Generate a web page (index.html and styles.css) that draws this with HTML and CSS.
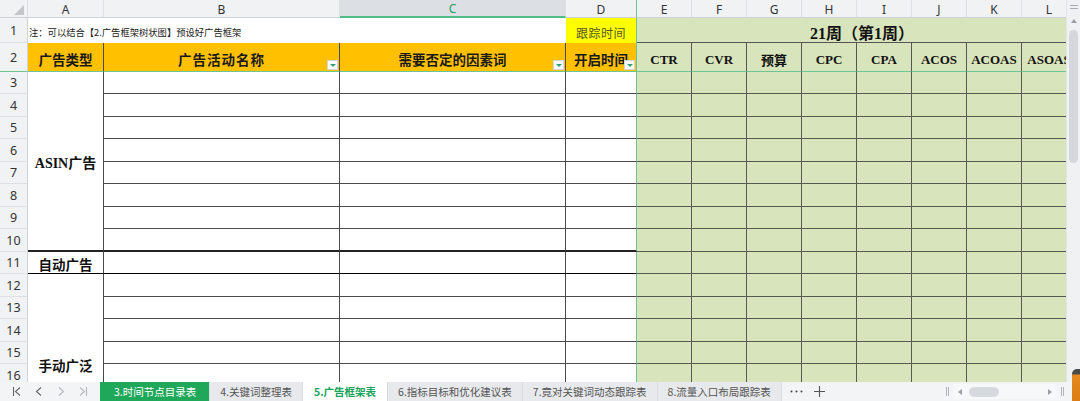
FILE: index.html
```html
<!DOCTYPE html>
<html lang="zh-CN">
<head>
    <meta charset="UTF-8">
    <meta name="viewport" content="width=device-width, initial-scale=1.0">
    <title>5.广告框架表</title>
    <link rel="stylesheet" href="styles.css">
</head>
<body>
    <div class="app">
        <div class="workspace">
            <div class="sheet-wrap">
                <div class="sheet" id="sheet">
                    <!-- column headers -->
                    <div class="ch corner">
                        <svg width="10" height="10" viewBox="0 0 10 10"><polygon points="10,0 10,10 0,10" fill="#c3c6cb"/></svg>
                    </div>
                    <div class="ch">A</div>
                    <div class="ch">B</div>
                    <div class="ch sel">C</div>
                    <div class="ch freeze-r">D</div>
                    <div class="ch">E</div>
                    <div class="ch">F</div>
                    <div class="ch">G</div>
                    <div class="ch">H</div>
                    <div class="ch">I</div>
                    <div class="ch">J</div>
                    <div class="ch">K</div>
                    <div class="ch">L</div>

                    <!-- row 1 -->
                    <div class="rh">1</div>
                    <div class="note">注：可以结合【2.广告框架树状图】预设好广告框架</div>
                    <div class="track">跟踪时间</div>
                    <div class="week">21周（第1周）</div>

                    <!-- row 2 -->
                    <div class="rh freeze-b">2</div>
                    <div class="hd">广告类型</div>
                    <div class="hd spaced">广告活动名称<span class="filter"></span></div>
                    <div class="hd">需要否定的因素词<span class="filter"></span></div>
                    <div class="hd freeze-r">开启时间<span class="filter"></span></div>
                    <div class="mh">CTR</div>
                    <div class="mh">CVR</div>
                    <div class="mh">预算</div>
                    <div class="mh">CPC</div>
                    <div class="mh">CPA</div>
                    <div class="mh">ACOS</div>
                    <div class="mh">ACOAS</div>
                    <div class="mh">ASOAS</div>
                </div>
            </div>
            <div class="vscroll">
                <div class="grip-h"></div>
                <div class="up">
                    <svg width="6" height="4" viewBox="0 0 6 4"><polygon points="3,0 6,4 0,4" fill="#9a9ea5"/></svg>
                </div>
                <div class="vthumb"></div>
            </div>
        </div>

        <div class="tabbar">
            <div class="nav">
                <svg width="10" height="11" viewBox="0 0 10 11"><path d="M1.5 1v9M8 1.5L3.5 5.5 8 9.5" stroke="#666" stroke-width="1.1" fill="none"/></svg>
                <svg width="10" height="11" viewBox="0 0 10 11"><path d="M7 1.5L2.5 5.5 7 9.5" stroke="#666" stroke-width="1.1" fill="none"/></svg>
                <svg width="10" height="11" viewBox="0 0 10 11"><path d="M3 1.5L7.5 5.5 3 9.5" stroke="#b4b7bc" stroke-width="1.1" fill="none"/></svg>
                <svg width="10" height="11" viewBox="0 0 10 11"><path d="M2 1.5L6.5 5.5 2 9.5M8.5 1v9" stroke="#b4b7bc" stroke-width="1.1" fill="none"/></svg>
            </div>
            <div class="tab green">3.时间节点目录表</div>
            <div class="tab">4.关键词整理表</div>
            <div class="tab active">5.广告框架表</div>
            <div class="tab">6.指标目标和优化建议表</div>
            <div class="tab">7.竟对关键词动态跟踪表</div>
            <div class="tab">8.流量入口布局跟踪表</div>
            <div class="more">
                <svg width="13" height="3" viewBox="0 0 13 3"><circle cx="1.5" cy="1.5" r="1" fill="#444"/><circle cx="6.5" cy="1.5" r="1" fill="#444"/><circle cx="11.5" cy="1.5" r="1" fill="#444"/></svg>
            </div>
            <div class="add">
                <svg width="11" height="11" viewBox="0 0 11 11"><path d="M5.5 0v11M0 5.5h11" stroke="#555" stroke-width="1.1"/></svg>
            </div>
            <div class="spacer"></div>
            <div class="hscroll">
                <span class="grip"></span>
                <div class="htrack">
                    <svg width="4" height="6" viewBox="0 0 4 6"><polygon points="0,3 4,0 4,6" fill="#9a9ea5"/></svg>
                    <span class="hthumb"></span>
                    <svg class="right" width="4" height="6" viewBox="0 0 4 6"><polygon points="4,3 0,0 0,6" fill="#9a9ea5"/></svg>
                </div>
                <span class="grip"></span>
            </div>
        </div>
        <div class="float-btn"></div>
    </div>

    <script>
        document.addEventListener('DOMContentLoaded', function() {
            const sheet = document.getElementById('sheet');

            // merged cells in column A
            const groups = {
                3: '<div class="cell a asin">ASIN广告</div>',
                11: '<div class="cell a auto">自动广告</div>',
                12: '<div class="cell a manual">手动广泛</div>'
            };

            for (let r = 3; r <= 20; r++) {
                let edge = '';
                if (r === 10) edge = ' thick';
                if (r === 11) edge = ' dark';

                let html = `<div class="rh">${r}</div>`;
                if (groups[r]) html += groups[r];
                if (r === 20) html += '<div class="cell a"></div>';
                html += `<div class="cell w${edge}"></div>`;
                html += `<div class="cell w${edge}"></div>`;
                html += `<div class="cell w freeze-r${edge}"></div>`;
                html += '<div class="cell g"></div>'.repeat(8);
                sheet.insertAdjacentHTML('beforeend', html);
            }
        });
    </script>
</body>
</html>
```

FILE: styles.css
```css
* {
    box-sizing: border-box;
}

body {
    margin: 0;
    padding: 0;
    width: 1080px;
    height: 401px;
    overflow: hidden;
    background: #ffffff;
    font-family: "Noto Sans CJK SC", "Noto Sans", sans-serif;
    color: #333;
}

.app {
    position: relative;
    display: flex;
    flex-direction: column;
    width: 1080px;
    height: 401px;
}

.workspace {
    display: flex;
    height: 382px;
    overflow: hidden;
}

.sheet-wrap {
    width: 1066px;
    overflow: hidden;
}

.sheet {
    display: grid;
    grid-template-columns: 28px 76px 236px 226px 71px repeat(8, 55px);
    grid-template-rows: 18px 25px 29px repeat(9, 22px 23px);
    width: 1077px;
}

.sheet > div {
    position: relative;
    display: flex;
    align-items: center;
    justify-content: center;
    white-space: nowrap;
    overflow: hidden;
}

/* headers */
.ch {
    background: #f1f2f4;
    border-right: 1px solid #dcdfe3;
    border-bottom: 1px solid #cfd2d7;
    font-family: "Noto Sans", "Liberation Sans", sans-serif;
    font-size: 12px;
    color: #333;
    padding-top: 1px;
}

.ch.corner {
    justify-content: flex-end;
    align-items: flex-start;
    padding: 5px 3px 0 0;
}

.ch.sel {
    background: #dcdfe4;
    color: #22a263;
    border-bottom: 2px solid #52bd86;
}

.rh {
    background: #f1f2f4;
    border-right: 1px solid #cfd2d7;
    border-bottom: 1px solid #dcdfe3;
    font-family: "Noto Sans", "Liberation Sans", sans-serif;
    font-size: 12.5px;
    color: #333;
}

.freeze-r {
    border-right: 1px solid #6cc593 !important;
}

.freeze-b {
    border-bottom: 1px solid #6cc593 !important;
}

/* row 1 */
.sheet > .note {
    grid-column: span 3;
    justify-content: flex-start;
    padding: 3px 0 0 1px;
    font-size: 9.3px;
    color: #222;
}

.track {
    background: #ffff00;
    border-right: 1px solid #6cc593;
    font-size: 12px;
    letter-spacing: 0.5px;
    color: #57572a;
    padding-top: 3px;
}

.week {
    grid-column: span 8;
    background: #d8e4bc;
    border-bottom: 1px solid #555;
    font-family: "Liberation Serif", "Noto Sans CJK SC", serif;
    font-size: 16px;
    font-weight: bold;
    color: #111;
    padding: 4px 0 0 10px;
}

/* row 2 */
.hd {
    background: #ffc000;
    border-right: 1px solid #4a4a4a;
    border-bottom: 1px solid #6cc593;
    font-size: 13.5px;
    font-weight: bold;
    color: #1a1a1a;
    padding-top: 4px;
}

.hd.spaced {
    letter-spacing: 1px;
}

.mh {
    background: #d8e4bc;
    border-right: 1px solid #555;
    border-bottom: 1px solid #6cc593;
    font-family: "Liberation Serif", "Noto Sans CJK SC", serif;
    font-size: 13px;
    font-weight: bold;
    color: #111;
    padding-top: 5px;
}

.filter {
    position: absolute;
    right: 1px;
    bottom: 1px;
    width: 11px;
    height: 10px;
    background: #fbfbfb;
    border: 1px solid #d6d6d6;
}

.filter::after {
    content: "";
    position: absolute;
    left: 2px;
    top: 3px;
    border-left: 3px solid transparent;
    border-right: 3px solid transparent;
    border-top: 3px solid #2e9f78;
}

/* data cells */
.cell.w {
    background: #fff;
    border-right: 1px solid #4a4a4a;
    border-bottom: 1px solid #4a4a4a;
}

.cell.g {
    background: #d8e4bc;
    border-right: 1px solid #575a52;
    border-bottom: 1px solid #575a52;
}

.cell.thick {
    border-bottom: 2px solid #222;
}

.cell.dark {
    border-bottom: 1px solid #000;
}

.cell.a {
    background: #fff;
    border-right: 1px solid #4a4a4a;
    border-bottom: 1px solid #000;
    font-family: "Liberation Serif", "Noto Sans CJK SC", serif;
    font-size: 13.5px;
    font-weight: bold;
    color: #111;
    padding-top: 2px;
}

.cell.asin {
    grid-row: span 8;
    font-size: 14px;
    border-bottom: 2px solid #222;
}

.cell.manual {
    grid-row: span 8;
}

/* vertical scrollbar */
.vscroll {
    width: 14px;
    background: #f0f1f3;
    border-left: 1px solid #e3e5e8;
    display: flex;
    flex-direction: column;
    align-items: center;
}

.grip-h {
    width: 8px;
    height: 4px;
    margin-top: 5px;
    border-top: 1px solid #a9adb3;
    border-bottom: 1px solid #a9adb3;
}

.up {
    margin-top: 10px;
    height: 6px;
    display: flex;
}

.vthumb {
    width: 9px;
    height: 133px;
    margin-top: 5px;
    background: #d4d7dc;
    border-radius: 5px;
}

/* sheet tabs */
.tabbar {
    display: flex;
    align-items: stretch;
    height: 19px;
    background: #f3f4f6;
    font-size: 10.5px;
    line-height: 19px;
}

.nav {
    width: 100px;
    display: flex;
    align-items: center;
    gap: 12px;
    padding-left: 12px;
}

.tab {
    padding: 0 10px;
    background: #e7e9ec;
    color: #555;
    border-right: 1px solid #dadce0;
}

.tab.green {
    background: #1fa85a;
    color: #fff;
    padding: 0 13px 0 14px;
}

.tab.active {
    background: #fff;
    color: #19a55c;
    font-weight: bold;
    padding: 0 11px;
}

.more {
    margin-left: 8px;
    display: flex;
    align-items: center;
}

.add {
    margin-left: 11px;
    display: flex;
    align-items: center;
}

.spacer {
    flex: 1;
}

.hscroll {
    width: 136px;
    display: flex;
    align-items: center;
    gap: 4px;
    padding: 0 16px 0 2px;
}

.grip {
    width: 3px;
    height: 9px;
    border-left: 1px solid #b0b3b8;
    border-right: 1px solid #b0b3b8;
}

.htrack {
    flex: 1;
    height: 15px;
    display: flex;
    align-items: center;
    padding: 0 5px;
    background: #f7f8fa;
}

.hthumb {
    width: 30px;
    height: 10px;
    margin-left: 7px;
    background: #d6d9de;
    border-radius: 5px;
}

.htrack .right {
    margin-left: auto;
}

.float-btn {
    position: absolute;
    left: 1072px;
    top: 369px;
    width: 10px;
    height: 34px;
    border-radius: 5px 0 0 0;
    background: linear-gradient(#4b4b4b 0, #4b4b4b 5px, #e58a1e 6px, #d97b12 100%);
}
```
